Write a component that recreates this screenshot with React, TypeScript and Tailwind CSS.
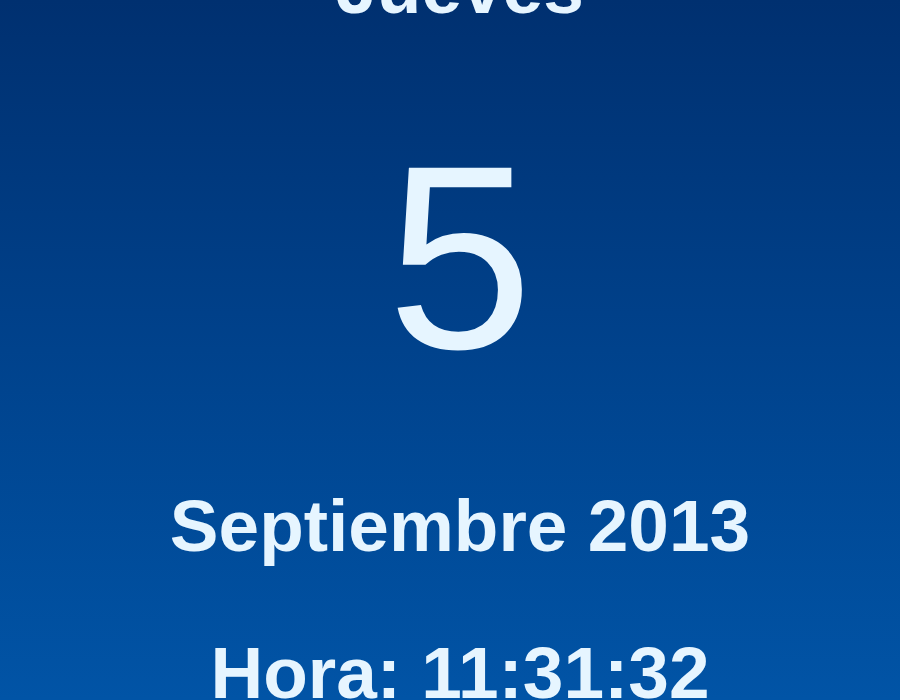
export default function App() {
  return (
    <div className="h-[700px] w-[900px] overflow-hidden bg-gradient-to-b from-[#003070] via-[#00428c] to-[#0154a6] pl-[20px] text-[#e6f5ff] font-['Liberation_Sans',Arial,sans-serif]">
      <div className="flex flex-col items-center">
        <div className="mt-[-49px] h-[73px] text-[73px] leading-[73px] font-semibold">Jueves</div>
        <div className="mt-[103px] h-[262px] text-[262px] leading-[262px]">5</div>
        <div className="mt-[100px] h-[73px] text-[73px] leading-[73px] font-semibold">Septiembre 2013</div>
        <div className="mt-[74px] h-[73px] text-[73px] leading-[73px] font-semibold">Hora: 11:31:32</div>
      </div>
    </div>
  );
}
